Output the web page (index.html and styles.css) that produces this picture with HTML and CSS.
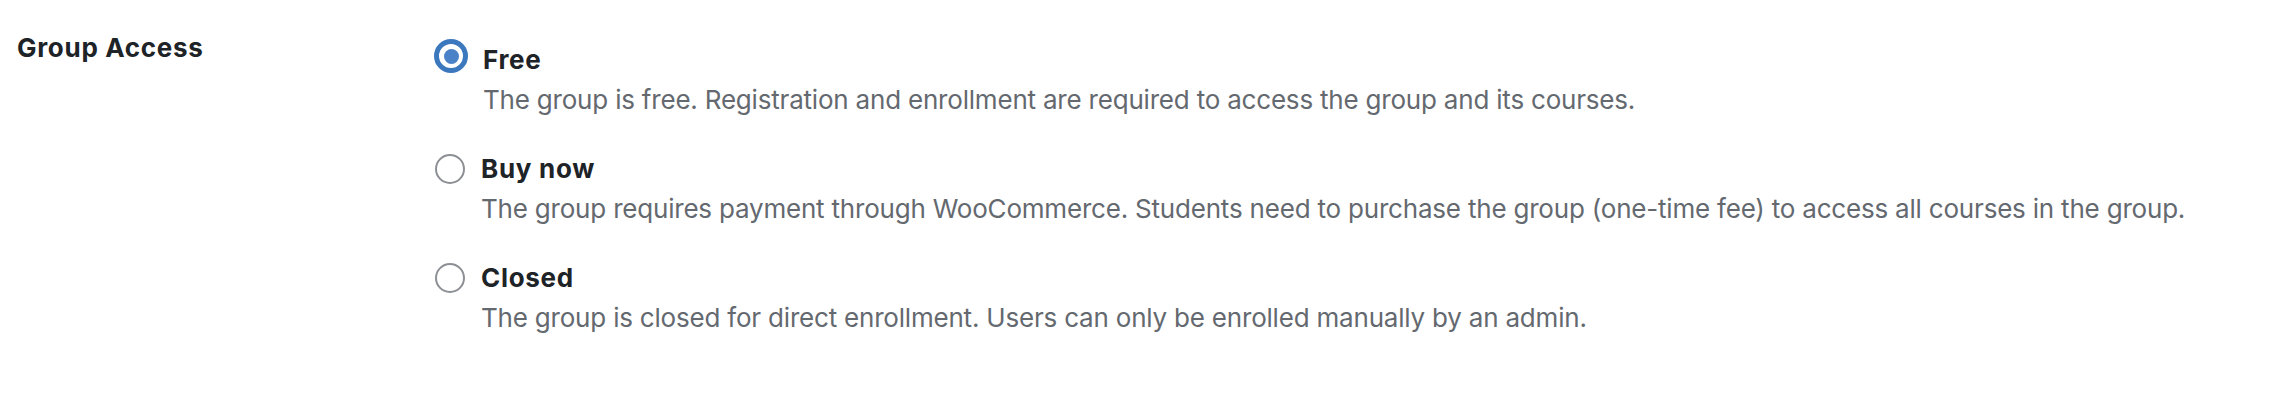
FILE: index.html
```html
<!DOCTYPE html>
<html lang="en">
<head>
<meta charset="utf-8">
<title>Group Access</title>
<link rel="stylesheet" href="styles.css">
</head>
<body>
<div class="form-row">
  <div class="row-label">Group Access</div>
  <div class="options">
    <label class="option">
      <input type="radio" name="access" class="radio" checked>
      <span class="option-body">
        <span class="option-title">Free</span>
        <span class="option-desc">The group is free. Registration and enrollment are required to access the group and its courses.</span>
      </span>
    </label>
    <label class="option">
      <input type="radio" name="access" class="radio">
      <span class="option-body">
        <span class="option-title">Buy now</span>
        <span class="option-desc">The group requires payment through WooCommerce. Students need to purchase the group (one-time fee) to access all courses in the group.</span>
      </span>
    </label>
    <label class="option">
      <input type="radio" name="access" class="radio">
      <span class="option-body">
        <span class="option-title">Closed</span>
        <span class="option-desc">The group is closed for direct enrollment. Users can only be enrolled manually by an admin.</span>
      </span>
    </label>
  </div>
</div>
</body>
</html>
```

FILE: styles.css
```css
html, body {
  margin: 0;
  padding: 0;
  background: #ffffff;
}
body {
  font-family: "Inter", "Liberation Sans", sans-serif;
  color: #1d2327;
  width: 2282px;
  height: 418px;
  overflow: hidden;
}
.form-row {
  display: grid;
  grid-template-columns: 418px 1fr;
  padding-left: 17px;
}
.row-label {
  font-size: 26px;
  font-weight: 700;
  line-height: 32px;
  letter-spacing: 0.7px;
  padding-top: 32px;
}
.options {
  display: flex;
  flex-direction: column;
  gap: 37px;
  padding-top: 44px;
}
.option {
  display: flex;
  align-items: flex-start;
  gap: 16px;
}
.radio {
  appearance: none;
  -webkit-appearance: none;
  margin: 0;
  width: 30px;
  height: 30px;
  flex: 0 0 auto;
  border: 2px solid #8c8f94;
  border-radius: 50%;
  background: #ffffff;
  box-sizing: border-box;
  margin-top: 1px;
  display: grid;
  place-items: center;
}
.radio:checked {
  width: 34px;
  height: 34px;
  margin-top: -5px;
  margin-left: -1px;
  margin-right: -1px;
  border: 5px solid #3c78be;
}
.radio:checked::before {
  content: "";
  width: 15px;
  height: 15px;
  border-radius: 50%;
  background: #4a82c8;
}
.option-body {
  display: flex;
  flex-direction: column;
  gap: 8px;
}
.option-title {
  font-size: 26px;
  font-weight: 700;
  line-height: 32px;
  letter-spacing: 0.7px;
}
.option-desc {
  font-size: 26px;
  font-weight: 400;
  line-height: 32px;
  letter-spacing: -0.2px;
  color: #646970;
}
```
